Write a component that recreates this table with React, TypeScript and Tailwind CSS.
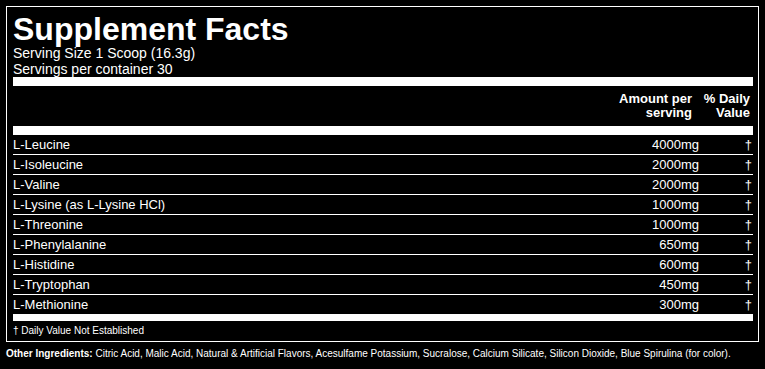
const ingredients = [
  { name: "L-Leucine", amount: "4000mg" },
  { name: "L-Isoleucine", amount: "2000mg" },
  { name: "L-Valine", amount: "2000mg" },
  { name: "L-Lysine (as L-Lysine HCl)", amount: "1000mg" },
  { name: "L-Threonine", amount: "1000mg" },
  { name: "L-Phenylalanine", amount: "650mg" },
  { name: "L-Histidine", amount: "600mg" },
  { name: "L-Tryptophan", amount: "450mg" },
  { name: "L-Methionine", amount: "300mg" },
];

export default function App() {
  return (
    <div className="min-h-screen bg-black px-[6px] pt-[6px] font-['Liberation_Sans',Arial,sans-serif] text-white">
      <div className="border border-white pl-[6px] pr-[5px] pt-[6px]">
        <h1 className="text-[32px] font-bold leading-[33px]">Supplement Facts</h1>
        <p className="text-[14px] leading-[15.5px]">Serving Size 1 Scoop (16.3g)</p>
        <p className="text-[14px] leading-[15.5px]">Servings per container 30</p>
        <div className="h-[9px] bg-white" />

        {/* column headers */}
        <div className="flex py-[6px] text-[13px] font-bold leading-[14px]">
          <div className="flex-1" />
          <div className="pr-[7px] text-right">
            Amount per
            <br />
            serving
          </div>
          <div className="w-[54px] pr-[3px] text-right">
            % Daily
            <br />
            Value
          </div>
        </div>
        <div className="h-[9px] bg-white" />

        {/* rows */}
        <div className="divide-y divide-white text-[13px] leading-[19px]">
          {ingredients.map((item) => (
            <div key={item.name} className="flex">
              <div className="flex-1">{item.name}</div>
              <div className="text-right">{item.amount}</div>
              <div className="w-[54px] pr-[1px] text-right">†</div>
            </div>
          ))}
        </div>
        <div className="h-[7px] bg-white" />

        <p className="py-[4px] text-[10px] leading-[12px]">† Daily Value Not Established</p>
      </div>

      <p className="mt-[6px] text-[10px] leading-[12px]">
        <span className="font-bold">Other Ingredients:</span> Citric Acid, Malic Acid, Natural &amp;
        Artificial Flavors, Acesulfame Potassium, Sucralose, Calcium Silicate, Silicon Dioxide, Blue
        Spirulina (for color).
      </p>
    </div>
  );
}
